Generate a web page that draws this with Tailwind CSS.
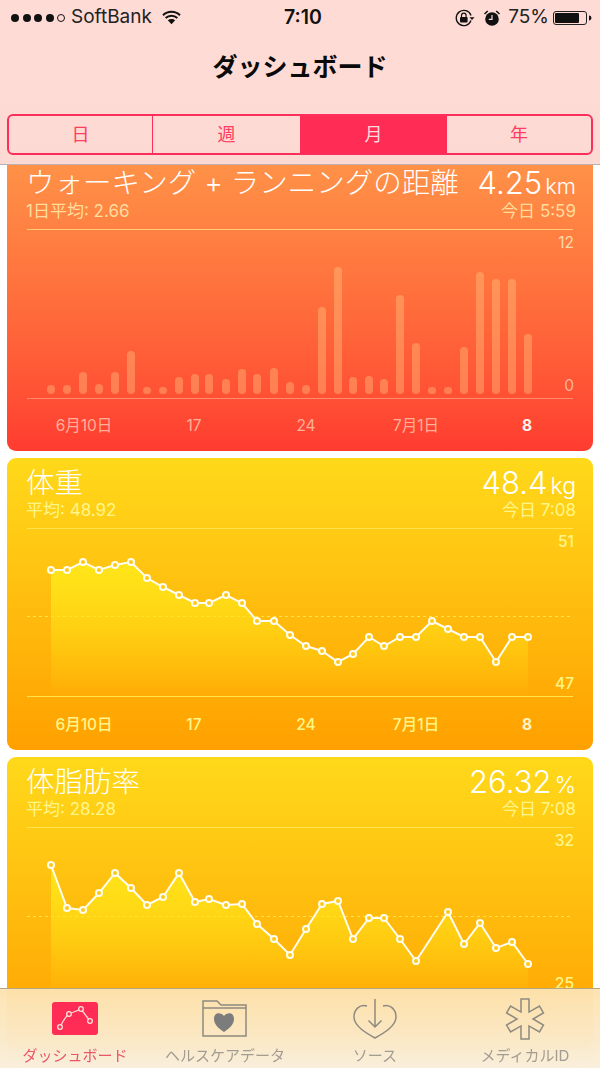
<!DOCTYPE html>
<html lang="ja">
<head>
    <meta charset="UTF-8">
    <meta name="viewport" content="width=device-width, initial-scale=1.0">
    <title>ダッシュボード</title>
    <script src="https://cdn.jsdelivr.net/npm/@tailwindcss/browser@4"></script>
</head>
<body class="bg-white">
<div class="relative w-[600px] h-[1068px] overflow-hidden flex flex-col bg-white text-black font-['Inter','Noto_Sans_CJK_JP',sans-serif]">

    <!-- ステータスバー + ナビ -->
    <header class="relative z-10 h-[165px] shrink-0 bg-gradient-to-b from-[#fedcd5] to-[#fdd9d4] border-b border-[#bdb2b0]">
        <div class="h-[35px] pl-[11px] pr-[8px] flex items-center relative">
            <div class="flex items-center gap-[3.500px]">
                <span class="w-[8px] h-[8px] rounded-full bg-[#111]"></span>
                <span class="w-[8px] h-[8px] rounded-full bg-[#111]"></span>
                <span class="w-[8px] h-[8px] rounded-full bg-[#111]"></span>
                <span class="w-[8px] h-[8px] rounded-full bg-[#111]"></span>
                <span class="w-[8px] h-[8px] rounded-full border border-[#111]"></span>
            </div>
            <span class="ml-[6px] text-[19px] text-[#222]">SoftBank</span>
            <svg class="ml-[10px]" width="19" height="15" viewBox="0 0 19 15">
                <path d="M1 5.2C5.8 .6 13.2 .6 18 5.2M3.6 8C7 4.9 12 4.9 15.4 8" fill="none" stroke="#111" stroke-width="2"/>
                <path d="M5.8 10.3C8 8.4 11 8.4 13.2 10.3L9.5 14.3Z" fill="#111"/>
            </svg>
            <span class="absolute left-[284px] top-[3px] text-[19.500px] font-semibold text-[#111]">7:10</span>
            <div class="ml-auto flex items-center">
                <svg width="20" height="18" viewBox="0 0 20 18">
                    <path d="M16 11.5A7.6 7.6 0 1 1 16 6.5" fill="none" stroke="#111" stroke-width="1.3"/>
                    <path d="M14.5 8.2h5L17 11Z" fill="#111"/>
                    <rect x="5" y="8" width="7.6" height="5.6" rx="1" fill="#111"/>
                    <path d="M6.5 8V6.4a2.3 2.3 0 0 1 4.6 0V8" fill="none" stroke="#111" stroke-width="1.2"/>
                </svg>
                <svg class="ml-[8px]" width="18" height="18" viewBox="0 0 18 18">
                    <circle cx="9" cy="10" r="6.8" fill="#111"/>
                    <path d="M9 6v4.4H5.8" fill="none" stroke="#fedcd5" stroke-width="1.2"/>
                    <path d="M1 4.4 4.2 1.6 5.3 2.6 2 5.6ZM17 4.4 13.8 1.6 12.700 2.6 16 5.6Z" fill="#111"/>
                </svg>
                <span class="ml-[7px] text-[19px] text-[#222]">75%</span>
                <svg class="ml-[4px]" width="39" height="14" viewBox="0 0 39 14">
                    <rect x=".5" y=".5" width="33" height="13" rx="2.5" fill="none" stroke="#222"/>
                    <rect x="2" y="2" width="24" height="10" rx="1" fill="#111"/>
                    <path d="M36 4.5c1.6 .3 2.4 1.2 2.4 2.5S37.600 9.200 36 9.500Z" fill="#111"/>
                </svg>
            </div>
        </div>
        <h1 class="mt-[12px] text-center text-[25px] leading-[40px] font-bold text-[#0a0a0a]">ダッシュボード</h1>
        <div class="mx-[7px] mt-[27px] h-[41px] grid grid-cols-[144px_147px_147px_1fr] rounded-[6px] border-2 border-[#fb2f5a] overflow-hidden text-[18px] text-[#ff3b60] text-center leading-[38px]">
            <div class="border-r-[1.500px] border-[#fb2f5a]">日</div>
            <div>週</div>
            <div class="bg-[#ff2d55] text-[#ffd9dc]">月</div>
            <div>年</div>
        </div>
    </header>

    <main class="flex-1 flex flex-col gap-[7px] px-[7px] overflow-hidden">
        <!-- 距離 -->
        <section class="shrink-0 rounded-b-[9px] overflow-hidden bg-gradient-to-b from-[#ff9147] to-[#ff3b30]">
            <div class="h-[59px] pl-[19px] pr-[17px] flex justify-between">
                <div class="whitespace-nowrap">
                    <div class="text-[28.500px] leading-[34px] mt-[1px] font-light text-white">ウォーキング + ランニングの距離</div>
                    <div class="text-[17px] leading-[22px] text-[#ffdd9c]">1日平均: 2.66</div>
                </div>
                <div class="text-right shrink-0">
                    <div class="h-[34px] leading-[34px] mt-[1px] flex items-baseline justify-end text-white"><span class="text-[31px] font-light">4.25</span><span class="text-[22px] font-light ml-[3px]">km</span></div>
                    <div class="text-[17px] leading-[22px] text-[#ffdd9c]">今日 5:59</div>
                </div>
            </div>
            <svg class="block" width="586" height="227" viewBox="7 224 586 227" font-size="15.500" fill="#ffb09a">
                <line x1="27" x2="573" y1="229.500" y2="229.500" stroke="#ffcc7a"/>
                <line x1="27" x2="573" y1="398.500" y2="398.500" stroke="#ff8a6d"/>
                <g fill="#ffd08a" fill-opacity=".36">
                    <rect x="47" y="385" width="8" height="9" rx="4"/><rect x="63" y="385" width="8" height="9" rx="4"/>
                    <rect x="79" y="372" width="8" height="22" rx="4"/><rect x="95" y="384" width="8" height="10" rx="4"/>
                    <rect x="111" y="372" width="8" height="22" rx="4"/><rect x="127" y="351" width="8" height="43" rx="4"/>
                    <rect x="143" y="387" width="8" height="7" rx="3.500"/><rect x="159" y="387" width="8" height="7" rx="3.500"/>
                    <rect x="175" y="377" width="8" height="17" rx="4"/><rect x="191" y="374" width="8" height="20" rx="4"/>
                    <rect x="205" y="374" width="8" height="20" rx="4"/><rect x="222" y="379" width="8" height="15" rx="4"/>
                    <rect x="238" y="369" width="8" height="25" rx="4"/><rect x="253" y="374" width="8" height="20" rx="4"/>
                    <rect x="270" y="368" width="8" height="26" rx="4"/><rect x="286" y="382" width="8" height="12" rx="4"/>
                    <rect x="302" y="385" width="8" height="9" rx="4"/><rect x="318" y="307" width="8" height="87" rx="4"/>
                    <rect x="334" y="267" width="8" height="127" rx="4"/><rect x="349" y="377" width="8" height="17" rx="4"/>
                    <rect x="365" y="376" width="8" height="18" rx="4"/><rect x="380" y="379" width="8" height="15" rx="4"/>
                    <rect x="396" y="295" width="8" height="99" rx="4"/><rect x="412" y="343" width="8" height="51" rx="4"/>
                    <rect x="428" y="387" width="8" height="7" rx="3.500"/><rect x="444" y="387" width="8" height="7" rx="3.500"/>
                    <rect x="460" y="347" width="8" height="47" rx="4"/><rect x="476" y="272" width="8" height="122" rx="4"/>
                    <rect x="492" y="279" width="8" height="115" rx="4"/><rect x="508" y="279" width="8" height="115" rx="4"/>
                    <rect x="524" y="334" width="8" height="60" rx="4"/>
                </g>
                <text x="574" y="248" text-anchor="end" fill="#ffd9a8">12</text>
                <text x="574" y="391" text-anchor="end" fill="#ffb39a">0</text>
                <text x="84" y="431" text-anchor="middle">6月10日</text>
                <text x="194" y="431" text-anchor="middle">17</text>
                <text x="306" y="431" text-anchor="middle">24</text>
                <text x="416" y="431" text-anchor="middle">7月1日</text>
                <text x="527" y="431" text-anchor="middle" font-weight="700" fill="#fff4ec">8</text>
            </svg>
        </section>

        <!-- 体重 -->
        <section class="shrink-0 rounded-[9px] overflow-hidden bg-gradient-to-b from-[#ffd91a] to-[#ffa000]">
            <div class="h-[67px] pl-[19px] pr-[17px] flex justify-between">
                <div>
                    <div class="text-[28.500px] leading-[33px] mt-[8px] font-light text-white">体重</div>
                    <div class="text-[17px] leading-[22px] text-[#fff68a]">平均: 48.92</div>
                </div>
                <div class="text-right shrink-0">
                    <div class="h-[32px] leading-[32px] mt-[9px] flex items-baseline justify-end text-white"><span class="text-[31px] font-light">48.4</span><span class="text-[23px] font-light ml-[3px]">kg</span></div>
                    <div class="text-[17px] leading-[22px] text-[#fff68a]">今日 7:08</div>
                </div>
            </div>
            <svg class="block" width="586" height="225" viewBox="7 525 586 225" font-size="15.500" font-weight="500" fill="#fff68a">
                <defs>
                    <linearGradient id="areaA" x1="0" y1="0" x2="0" y2="1">
                        <stop offset="0" stop-color="#ffe619"/>
                        <stop offset="1" stop-color="#ffe619" stop-opacity="0"/>
                    </linearGradient>
                </defs>
                <line x1="27" x2="573" y1="528.500" y2="528.500" stroke="#ffe44d"/>
                <line x1="27" x2="573" y1="616.500" y2="616.500" stroke="#ffe44d" stroke-dasharray="3 3"/>
                <line x1="27" x2="573" y1="696.500" y2="696.500" stroke="#ffe44d"/>
                <path fill="url(#areaA)" d="M51 570 67 570 83 562 99 570 115 565 131 562 147 578 163 587 179 595 195 603 209 603 226 595 242 603 257 621 274 621 290 635 306 646 322 651 338 662 353 654 369 637 384 646 400 637 416 637 432 621 448 629 464 637 480 637 496 662 512 637 528 637 528 697 51 697Z"/>
                <polyline fill="none" stroke="#fffdf0" stroke-width="2" points="51,570 67,570 83,562 99,570 115,565 131,562 147,578 163,587 179,595 195,603 209,603 226,595 242,603 257,621 274,621 290,635 306,646 322,651 338,662 353,654 369,637 384,646 400,637 416,637 432,621 448,629 464,637 480,637 496,662 512,637 528,637"/>
                <g fill="#ffc915" stroke="#fffdf0" stroke-width="2">
                    <circle cx="51" cy="570" r="3"/><circle cx="67" cy="570" r="3"/><circle cx="83" cy="562" r="3"/><circle cx="99" cy="570" r="3"/>
                    <circle cx="115" cy="565" r="3"/><circle cx="131" cy="562" r="3"/><circle cx="147" cy="578" r="3"/><circle cx="163" cy="587" r="3"/>
                    <circle cx="179" cy="595" r="3"/><circle cx="195" cy="603" r="3"/><circle cx="209" cy="603" r="3"/><circle cx="226" cy="595" r="3"/>
                    <circle cx="242" cy="603" r="3"/><circle cx="257" cy="621" r="3"/><circle cx="274" cy="621" r="3"/><circle cx="290" cy="635" r="3"/>
                    <circle cx="306" cy="646" r="3"/><circle cx="322" cy="651" r="3"/><circle cx="338" cy="662" r="3"/><circle cx="353" cy="654" r="3"/>
                    <circle cx="369" cy="637" r="3"/><circle cx="384" cy="646" r="3"/><circle cx="400" cy="637" r="3"/><circle cx="416" cy="637" r="3"/>
                    <circle cx="432" cy="621" r="3"/><circle cx="448" cy="629" r="3"/><circle cx="464" cy="637" r="3"/><circle cx="480" cy="637" r="3"/>
                    <circle cx="496" cy="662" r="3"/><circle cx="512" cy="637" r="3"/><circle cx="528" cy="637" r="3"/>
                </g>
                <text x="574" y="547" text-anchor="end">51</text>
                <text x="574" y="689" text-anchor="end">47</text>
                <text x="84" y="730" text-anchor="middle">6月10日</text>
                <text x="194" y="730" text-anchor="middle">17</text>
                <text x="306" y="730" text-anchor="middle">24</text>
                <text x="416" y="730" text-anchor="middle">7月1日</text>
                <text x="527" y="730" text-anchor="middle" font-weight="700" fill="#fff6c8">8</text>
            </svg>
        </section>

        <!-- 体脂肪率 -->
        <section class="shrink-0 rounded-[9px] overflow-hidden bg-gradient-to-b from-[#ffd91a] to-[#ffa000]">
            <div class="h-[67px] pl-[19px] pr-[17px] flex justify-between">
                <div>
                    <div class="text-[28.500px] leading-[33px] mt-[8px] font-light text-white">体脂肪率</div>
                    <div class="text-[17px] leading-[22px] text-[#fff68a]">平均: 28.28</div>
                </div>
                <div class="text-right shrink-0">
                    <div class="h-[32px] leading-[32px] mt-[9px] flex items-baseline justify-end text-white"><span class="text-[31px] font-light">26.32</span><span class="text-[23px] font-light ml-[3px]">%</span></div>
                    <div class="text-[17px] leading-[22px] text-[#fff68a]">今日 7:08</div>
                </div>
            </div>
            <svg class="block" width="586" height="225" viewBox="7 824 586 225" font-size="15.500" font-weight="500" fill="#fff68a">
                <defs>
                    <linearGradient id="areaB" x1="0" y1="0" x2="0" y2="1">
                        <stop offset="0" stop-color="#ffe619"/>
                        <stop offset="1" stop-color="#ffe619" stop-opacity="0"/>
                    </linearGradient>
                </defs>
                <line x1="27" x2="573" y1="827.500" y2="827.500" stroke="#ffe44d"/>
                <line x1="27" x2="573" y1="916.500" y2="916.500" stroke="#ffe44d" stroke-dasharray="3 3"/>
                <line x1="27" x2="573" y1="996.500" y2="996.500" stroke="#ffe44d"/>
                <path fill="url(#areaB)" d="M51 865 67 908 83 910 99 893 115 873 131 888 147 905 163 897 179 873 195 902 209 899 226 905 242 904 257 924 274 939 290 955 306 929 322 904 338 901 353 939 369 918 384 918 400 939 416 961 448 912 464 944 480 923 496 948 512 942 528 964 528 997 51 997Z"/>
                <polyline fill="none" stroke="#fffdf0" stroke-width="2" points="51,865 67,908 83,910 99,893 115,873 131,888 147,905 163,897 179,873 195,902 209,899 226,905 242,904 257,924 274,939 290,955 306,929 322,904 338,901 353,939 369,918 384,918 400,939 416,961 448,912 464,944 480,923 496,948 512,942 528,964"/>
                <g fill="#ffc915" stroke="#fffdf0" stroke-width="2">
                    <circle cx="51" cy="865" r="3"/><circle cx="67" cy="908" r="3"/><circle cx="83" cy="910" r="3"/><circle cx="99" cy="893" r="3"/>
                    <circle cx="115" cy="873" r="3"/><circle cx="131" cy="888" r="3"/><circle cx="147" cy="905" r="3"/><circle cx="163" cy="897" r="3"/>
                    <circle cx="179" cy="873" r="3"/><circle cx="195" cy="902" r="3"/><circle cx="209" cy="899" r="3"/><circle cx="226" cy="905" r="3"/>
                    <circle cx="242" cy="904" r="3"/><circle cx="257" cy="924" r="3"/><circle cx="274" cy="939" r="3"/><circle cx="290" cy="955" r="3"/>
                    <circle cx="306" cy="929" r="3"/><circle cx="322" cy="904" r="3"/><circle cx="338" cy="901" r="3"/><circle cx="353" cy="939" r="3"/>
                    <circle cx="369" cy="918" r="3"/><circle cx="384" cy="918" r="3"/><circle cx="400" cy="939" r="3"/><circle cx="416" cy="961" r="3"/>
                    <circle cx="448" cy="912" r="3"/><circle cx="464" cy="944" r="3"/><circle cx="480" cy="923" r="3"/><circle cx="496" cy="948" r="3"/>
                    <circle cx="512" cy="942" r="3"/><circle cx="528" cy="964" r="3"/>
                </g>
                <text x="574" y="846" text-anchor="end">32</text>
                <text x="574" y="989" text-anchor="end">25</text>
            </svg>
        </section>
    </main>

    <!-- タブバー (カードの上に半透明で重なる) -->
    <nav class="absolute left-0 right-0 bottom-0 h-[80px] grid grid-cols-4 text-center text-[15px] leading-[20px] text-[#a39c90] bg-gradient-to-b from-[#fde3b2]/95 to-[#f8eedb]/95 backdrop-blur-xl border-t border-[#b9a67e]">
        <div class="flex flex-col items-center">
            <svg class="mt-[13px]" width="46" height="33" viewBox="51 1002 46 33">
                <rect x="51" y="1002" width="46" height="33" rx="3" fill="#ff2d55"/>
                <path d="M59 1027C62 1021 64 1017 68 1014C72 1012 76 1011 80 1009L89 1021" fill="none" stroke="#ffd9d0" stroke-width="1.300"/>
                <g fill="#ff2d55" stroke="#ffe4dc" stroke-width="1.300">
                    <circle cx="59" cy="1027" r="2.300"/><circle cx="68" cy="1014" r="2.300"/><circle cx="80" cy="1009" r="2.300"/><circle cx="89" cy="1021" r="2.300"/>
                </g>
            </svg>
            <span class="mt-[11px] text-[#e8566e]">ダッシュボード</span>
        </div>
        <div class="flex flex-col items-center">
            <svg class="mt-[11px]" width="46" height="37" viewBox="203 1000 46 37" fill="none" stroke="#8f8a80" stroke-width="1.500">
                <path d="M204 1036V1001H218L222 1005H247V1036Z"/>
                <path d="M204 1008H247"/>
                <path d="M225 1032C219 1028 215 1024 215 1019C215 1012 222 1012 225 1016C228 1012 235 1012 235 1019C235 1024 231 1028 225 1032Z" fill="#7c7c7c" stroke="none"/>
            </svg>
            <span class="mt-[9px]">ヘルスケアデータ</span>
        </div>
        <div class="flex flex-col items-center">
            <svg class="mt-[10px]" width="44" height="40" viewBox="352 999 44 40" fill="none" stroke="#8f8a80" stroke-width="1.500">
                <path d="M366 1006C358 1004 353 1010 353 1017C353 1026 365 1033 374 1038C383 1033 395 1026 395 1017C395 1010 390 1004 382 1006"/>
                <path d="M374 999V1027M367.500 1020.500 374 1027 380.500 1020.500"/>
            </svg>
            <span class="mt-[7px]">ソース</span>
        </div>
        <div class="flex flex-col items-center">
            <svg class="mt-[9px]" width="40" height="42" viewBox="-20 -21 40 42" fill="none" stroke="#8f8a80" stroke-width="1.500">
                <path d="M4 -20V-6.930L14.450 -12.960 18.450 -6.040 8 0 18.450 6.040 14.450 12.960 4 6.930V20H-4V6.930L-14.450 12.960-18.450 6.040-8 0-18.450-6.040-14.450-12.960-4-6.930V-20Z"/>
            </svg>
            <span class="mt-[6px]">メディカルID</span>
        </div>
    </nav>
</div>
</body>
</html>
